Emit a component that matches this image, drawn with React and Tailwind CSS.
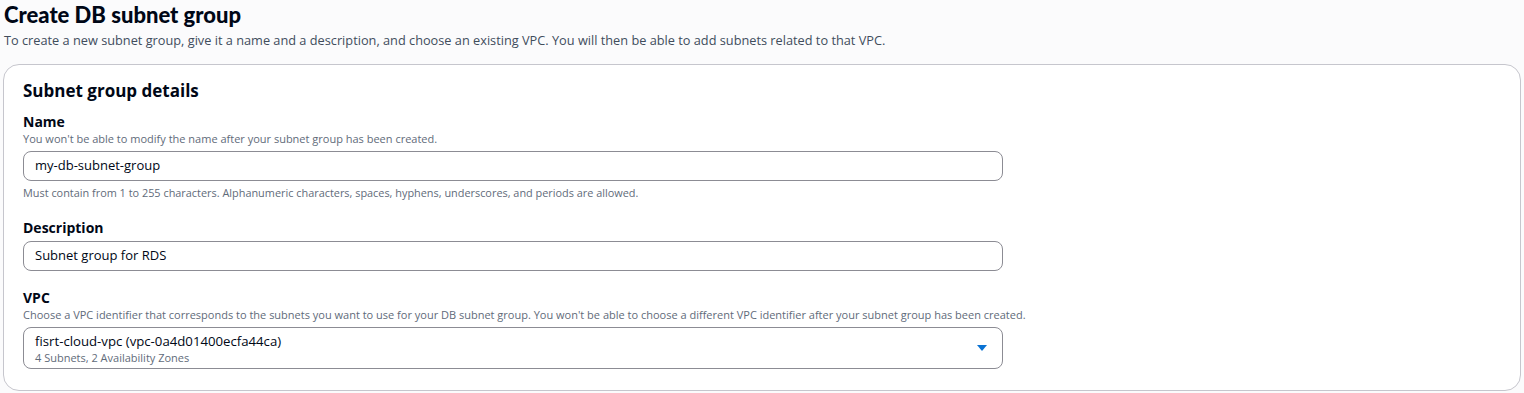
import React from 'react';

const font = { fontFamily: '"Open Sans", "Noto Sans", Arial, sans-serif' };
const headFont = { fontFamily: 'Lato, "Open Sans", Arial, sans-serif' };

function Field({ label, hint, children, constraint }) {
  return (
    <div className="flex flex-col">
      <div className="text-[14px] font-bold leading-[18px] text-[#000716]">{label}</div>
      {hint && <div className="text-[11px] leading-[16px] text-[#5f6b7a]">{hint}</div>}
      <div className="mt-[4px]">{children}</div>
      {constraint && <div className="mt-[4px] text-[10.9px] leading-[16px] text-[#5f6b7a]">{constraint}</div>}
    </div>
  );
}

function TextInput({ value }) {
  return (
    <div className="flex h-[30px] w-[980px] items-center rounded-[8px] border border-[#8c8c94] bg-white px-[11px] text-[13px] text-[#000716]">
      {value}
    </div>
  );
}

export default function App() {
  return (
    <div className="min-h-[393px] w-[1524px] bg-[#fbfbfc] px-[3px]" style={font}>
      <h1 className="pl-[1px] pt-[1px] text-[22px] font-black leading-[28px] text-[#000716]" style={headFont}>Create DB subnet group</h1>
      <p className="mt-[2px] pl-[1px] text-[12.75px] leading-[18px] text-[#414d5c]">
        To create a new subnet group, give it a name and a description, and choose an existing VPC. You will then be able to add subnets related to that VPC.
      </p>
      <div className="mt-[15px] h-[327px] w-[1518px] rounded-[16px] border border-[#c6c6cd] bg-white px-[19px] pt-[14px]">
        <h2 className="text-[17px] font-bold leading-[24px] text-[#000716]">Subnet group details</h2>
        <div className="mt-[10px] flex flex-col gap-[18px]">
          <Field
            label="Name"
            hint="You won't be able to modify the name after your subnet group has been created."
            constraint="Must contain from 1 to 255 characters. Alphanumeric characters, spaces, hyphens, underscores, and periods are allowed."
          >
            <TextInput value="my-db-subnet-group" />
          </Field>
          <Field label="Description">
            <TextInput value="Subnet group for RDS" />
          </Field>
          <Field
            label="VPC"
            hint="Choose a VPC identifier that corresponds to the subnets you want to use for your DB subnet group. You won't be able to choose a different VPC identifier after your subnet group has been created."
          >
            <div className="flex h-[42px] w-[980px] items-center justify-between rounded-[8px] border border-[#8c8c94] bg-white pl-[11px] pr-[14px]">
              <div className="flex flex-col">
                <span className="text-[13.2px] leading-[18px] text-[#000716]">fisrt-cloud-vpc (vpc-0a4d01400ecfa44ca)</span>
                <span className="text-[11px] leading-[15px] text-[#5f6b7a]">4 Subnets, 2 Availability Zones</span>
              </div>
              <svg width="12" height="8" viewBox="0 0 12 8">
                <path d="M1 1h10L6 7z" fill="#0972d3" />
              </svg>
            </div>
          </Field>
        </div>
      </div>
    </div>
  );
}
